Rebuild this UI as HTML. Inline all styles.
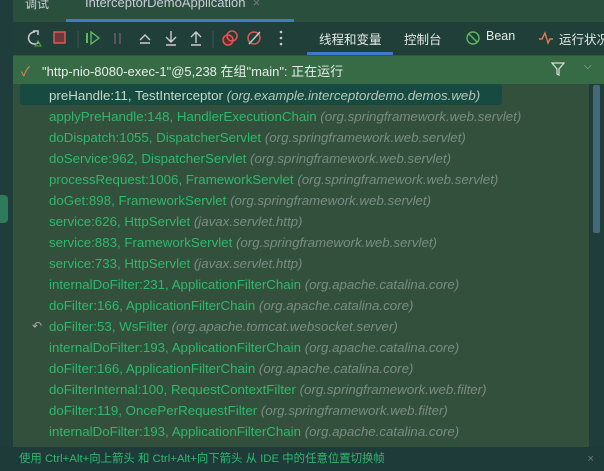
<!DOCTYPE html>
<html><head><meta charset="utf-8"><style>
*{margin:0;padding:0;box-sizing:border-box}
body{width:604px;height:471px;overflow:hidden;background:#1f3d3a;font-family:"Liberation Sans","Noto Sans CJK SC",sans-serif;position:relative}
.abs{position:absolute;white-space:nowrap}
.top{left:13px;top:0;width:591px;height:22px;background:#2a4f3c}
.tb{left:13px;top:22px;width:591px;height:33px;background:#203f38}
.hdr{left:13px;top:55px;width:591px;height:29px;background:#366b45;border-top:1px solid #2c5a3c}
.list{left:13px;top:84px;width:576px;height:363px;background:#33503d}
.sel{left:20px;top:84px;width:482px;height:21px;background:#174a40;border-radius:3px}
.row{position:absolute;left:49px;font-size:13.3px;color:#2fb86c;white-space:nowrap;line-height:21px}
.row i{color:#7b8c80}
.bot{left:0;top:447px;width:604px;height:24px;background:#1e3b3a;color:#2fb86c;font-size:11.4px;line-height:24px;padding-left:19px}
.tab{font-size:12.5px;color:#e4e9e6;top:29px}
</style></head><body>
<div class="abs top"></div>
<div class="abs" style="left:25px;top:-5px;color:#ccd;font-size:12px">调试</div>
<div class="abs" style="left:85px;top:-5px;color:#ccd;font-size:13px">InterceptorDemoApplication &nbsp;<span style="color:#778">×</span></div>
<div class="abs" style="left:66px;top:19px;width:228px;height:3px;background:#3d7ac8"></div>
<div class="abs tb"></div>
<svg class="abs" style="left:25px;top:28px" width="270" height="22">
<path d="M10 4a6 6 0 1 0 4 10" stroke="#ccc" stroke-width="1.5" fill="none"/><path d="M8 3h5v4" stroke="#ccc" fill="none" stroke-width="1.5"/><path d="M10 18l3-5 3 5z" stroke="#5a5" fill="none"/>
<rect x="29" y="4" width="11" height="11" fill="#6b3a3a" stroke="#e05555" stroke-width="1.5"/>
<line x1="53" y1="3" x2="53" y2="20" stroke="#3a5a50"/>
<rect x="61" y="5" width="2" height="10" fill="#5fb85f"/><path d="M66 4l8 6-8 6z" stroke="#5fb85f" fill="none" stroke-width="1.4"/>
<rect x="89" y="5" width="2" height="11" fill="#556"/><rect x="94" y="5" width="2" height="11" fill="#556"/>
<path d="M115 12l5-5 5 5M115 15h10" stroke="#ccc" fill="none" stroke-width="1.4"/>
<path d="M146 3v11M141 9l5 5 5-5M141 17h10" stroke="#ccc" fill="none" stroke-width="1.4"/>
<path d="M171 15V4M166 9l5-5 5 5M166 17h10" stroke="#ccc" fill="none" stroke-width="1.4"/>
<line x1="188" y1="3" x2="188" y2="20" stroke="#3a5a50"/>
<circle cx="203" cy="12" r="5" fill="#6b2a2a" stroke="#e05555" stroke-width="1.5"/><circle cx="207" cy="8" r="5" fill="none" stroke="#e05555" stroke-width="1.5"/>
<circle cx="229" cy="10" r="6" fill="none" stroke="#e05555" stroke-width="1.5"/><line x1="224" y1="16" x2="235" y2="4" stroke="#ccc" stroke-width="1.4"/>
<circle cx="256" cy="4" r="1.3" fill="#ccc"/><circle cx="256" cy="10" r="1.3" fill="#ccc"/><circle cx="256" cy="16" r="1.3" fill="#ccc"/>
</svg>
<div class="abs tab" style="left:319px">线程和变量</div>
<div class="abs" style="left:307px;top:52px;width:86px;height:3px;background:#3d7ac8"></div>
<div class="abs tab" style="left:404px">控制台</div>
<svg class="abs" style="left:465px;top:30px" width="16" height="16"><circle cx="8" cy="8" r="6" fill="none" stroke="#5fb85f" stroke-width="1.4"/><line x1="4" y1="4" x2="12" y2="12" stroke="#5fb85f" stroke-width="1.4"/></svg>
<div class="abs tab" style="left:486px">Bean</div>
<svg class="abs" style="left:538px;top:30px" width="16" height="16"><path d="M1 9h3l3-6 3 10 2-4h3" stroke="#e07a50" fill="none" stroke-width="1.4"/></svg>
<div class="abs tab" style="left:559px">运行状况</div>
<div class="abs hdr"></div>
<div class="abs" style="left:21px;top:61px;color:#e08a55;font-size:13px">✓</div>
<div class="abs" style="left:42px;top:61px;color:#e8ede9;font-size:13px">"http-nio-8080-exec-1"@5,238 在组"main": 正在运行</div>
<svg class="abs" style="left:551px;top:62px" width="14" height="14"><path d="M1 1h12l-5 6v6l-2-1V7z" fill="none" stroke="#ddd" stroke-width="1.2"/></svg>
<div class="abs" style="left:584px;top:61px;color:#bbb;font-size:10px">⌵</div>
<div class="abs list"></div>
<div class="abs sel"></div>
<div class="abs" style="left:593px;top:85px;width:7px;height:148px;background:#46697a;border-radius:2px"></div>
<div class="row" style="top:85px;color:#c8d8cc">preHandle:11, TestInterceptor <i style="color:#b7c6bb">(org.example.interceptordemo.demos.web)</i></div>
<div class="row" style="top:106px">applyPreHandle:148, HandlerExecutionChain <i>(org.springframework.web.servlet)</i></div>
<div class="row" style="top:127px">doDispatch:1055, DispatcherServlet <i>(org.springframework.web.servlet)</i></div>
<div class="row" style="top:148px">doService:962, DispatcherServlet <i>(org.springframework.web.servlet)</i></div>
<div class="row" style="top:169px">processRequest:1006, FrameworkServlet <i>(org.springframework.web.servlet)</i></div>
<div class="row" style="top:190px">doGet:898, FrameworkServlet <i>(org.springframework.web.servlet)</i></div>
<div class="row" style="top:211px">service:626, HttpServlet <i>(javax.servlet.http)</i></div>
<div class="row" style="top:232px">service:883, FrameworkServlet <i>(org.springframework.web.servlet)</i></div>
<div class="row" style="top:253px">service:733, HttpServlet <i>(javax.servlet.http)</i></div>
<div class="row" style="top:274px">internalDoFilter:231, ApplicationFilterChain <i>(org.apache.catalina.core)</i></div>
<div class="row" style="top:295px">doFilter:166, ApplicationFilterChain <i>(org.apache.catalina.core)</i></div>
<div class="abs" style="left:32px;top:316px;color:#aaa;font-size:12px;line-height:21px">↶</div>
<div class="row" style="top:316px">doFilter:53, WsFilter <i>(org.apache.tomcat.websocket.server)</i></div>
<div class="row" style="top:337px">internalDoFilter:193, ApplicationFilterChain <i>(org.apache.catalina.core)</i></div>
<div class="row" style="top:358px">doFilter:166, ApplicationFilterChain <i>(org.apache.catalina.core)</i></div>
<div class="row" style="top:379px">doFilterInternal:100, RequestContextFilter <i>(org.springframework.web.filter)</i></div>
<div class="row" style="top:400px">doFilter:119, OncePerRequestFilter <i>(org.springframework.web.filter)</i></div>
<div class="row" style="top:421px">internalDoFilter:193, ApplicationFilterChain <i>(org.apache.catalina.core)</i></div>
<div class="abs" style="left:0;top:195px;width:8px;height:28px;background:#2f7a5a;border-radius:0 4px 4px 0"></div>
<div class="abs bot">使用 Ctrl+Alt+向上箭头 和 Ctrl+Alt+向下箭头 从 IDE 中的任意位置切换帧<span style="position:absolute;right:10px;color:#778">×</span></div>
</body></html>
